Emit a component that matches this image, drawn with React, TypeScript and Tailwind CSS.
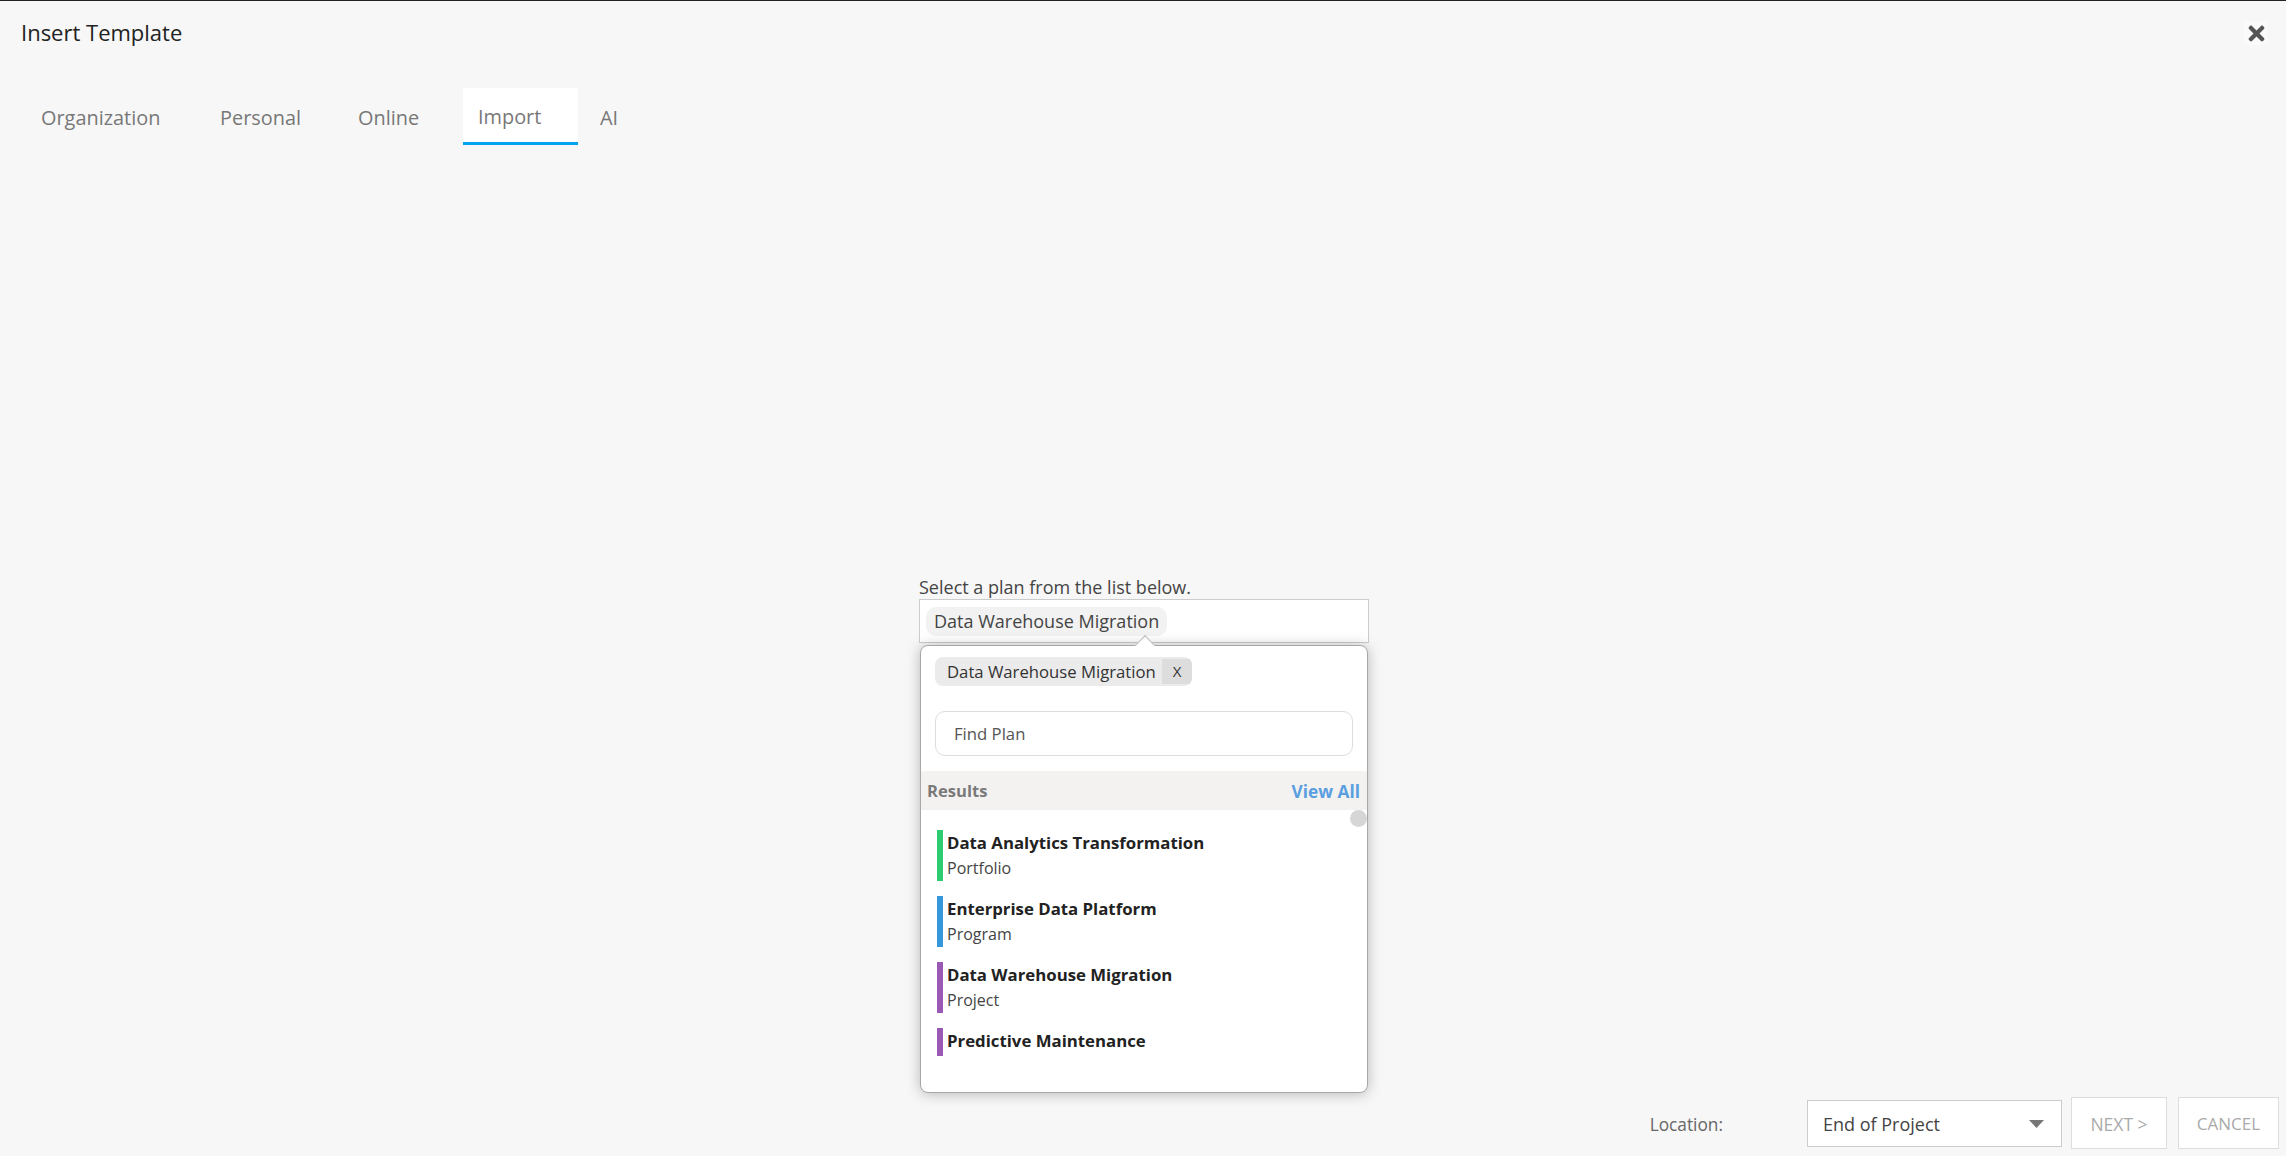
import React from "react";
import { FaTimes } from "react-icons/fa";

const tabs = [
  { label: "Organization", width: "w-[179px]" },
  { label: "Personal", width: "w-[138px]" },
  { label: "Online", width: "w-[120px]" },
  { label: "Import", width: "w-[115px] mr-[7px]" },
  { label: "AI", width: "w-[60px]" },
];
const results = [
  { title: "Data Analytics Transformation", sub: "Portfolio", bar: "bg-[#2ecc71]" },
  { title: "Enterprise Data Platform", sub: "Program", bar: "bg-[#3498db]" },
  { title: "Data Warehouse Migration", sub: "Project", bar: "bg-[#9b59b6]" },
  { title: "Predictive Maintenance", sub: "", bar: "bg-[#9b59b6]" },
];

export default function App() {
  return (
    <div className="h-screen w-full flex flex-col overflow-hidden bg-[#f7f7f7] border-t border-[#222] font-['Open_Sans',sans-serif] text-[#444]">
      <header className="h-[62px] flex items-center justify-between pl-[21px] pr-[18px] shrink-0">
        <h1 className="text-[22px] text-[#222] font-normal">Insert Template</h1>
        <button className="w-[24px] h-[24px] mt-[2px] flex items-center justify-center bg-[#fafafa] text-[#555] text-[23px]">
          <FaTimes />
        </button>
      </header>

      <nav className="h-[57px] mt-[25px] flex pl-[26px] shrink-0 text-[19.9px] text-[#777]">
        {tabs.map((t) => (
          <div
            key={t.label}
            className={
              t.label === "Import"
                ? t.width + " pl-[15px] pt-[14px] bg-white border-b-[3px] border-[#00a4ef]"
                : t.width + " pl-[15px] pt-[15px]"
            }
          >
            {t.label}
          </div>
        ))}
      </nav>

      <main className="flex-1 flex justify-center min-h-0">
        <div className="w-[450px] mt-[430px] ml-[2px]">
          <div className="h-[24px] leading-[24px] text-[18px] text-[#444] whitespace-nowrap">Select a plan from the list below.</div>
          <div className="relative">
            <div className="h-[44px] bg-white border border-[#ccc] flex items-center pl-[6px]">
              <span className="h-[29px] leading-[29px] px-[8px] rounded-[10px] bg-[#f2f2f2] text-[18px] text-[#444] whitespace-nowrap">
                Data Warehouse Migration
              </span>
            </div>

            <div className="absolute left-[1px] top-[46px] w-[448px] h-[448px] z-10 bg-white rounded-[8px] border border-[#a8a8a8] shadow-[0_1px_14px_rgba(0,0,0,0.26)]">
              <div className="absolute left-[217px] top-[-8px] w-[14px] h-[14px] rotate-45 bg-white border-t border-l border-[#bbb]" />
              <div className="relative pt-[11px]">
                <div className="ml-[14px] w-[257px] h-[29px] flex items-center rounded-[8px] bg-[#ebebeb] overflow-hidden pl-[12px] text-[16.7px] text-[#333]">
                  <span className="flex-1 whitespace-nowrap">Data Warehouse Migration</span>
                  <span className="w-[30px] h-[25px] flex items-center justify-center bg-[#ddd] text-[15px]">X</span>
                </div>
                <div className="mx-[14px] mt-[25px] h-[45px] flex items-center pl-[18px] pt-[1px] rounded-[10px] border border-[#ddd] bg-white text-[16.7px] text-[#555]">
                  Find Plan
                </div>
                <div className="mt-[15px] h-[39px] flex items-center justify-between pl-[6px] pr-[7px] pt-[2px] bg-[#f3f2f1] font-bold">
                  <span className="text-[16.6px] text-[#7a7a7a]">Results</span>
                  <a className="text-[17.3px] text-[#5b9fe0]">View All</a>
                </div>
              </div>
              <div className="relative pt-[20px] pl-[16px]">
                <div className="absolute right-0 top-0 w-[17px] h-[17px] rounded-full bg-[#d6d6d6]" />
                {results.map((r) => (
                  <div key={r.title} className={r.sub ? "flex gap-[4px] h-[51px] mb-[15px]" : "flex gap-[4px] h-[28px]"}>
                    <div className={"w-[6px] " + r.bar} />
                    <div>
                      <div className="h-[25px] leading-[25px] text-[16.8px] font-bold text-[#222]">{r.title}</div>
                      {r.sub && <div className="h-[26px] leading-[26px] text-[16px] text-[#444]">{r.sub}</div>}
                    </div>
                  </div>
                ))}
              </div>
            </div>
          </div>
        </div>
      </main>

      <footer className="h-[52px] mb-[7px] flex items-center justify-end pr-[7px] shrink-0">
        <span className="text-[17.3px] text-[#666] mr-[84px] pt-[3px]">Location:</span>
        <div className="w-[255px] h-[47px] mt-[1px] mr-[9px] flex items-center justify-between pl-[15px] pr-[17px] pt-[1px] bg-white border border-[#ccc] text-[18px] text-[#444]">
          End of Project
          <svg width="15" height="8" viewBox="0 0 15 8" className="-mt-[1px]"><polygon points="0,0 15,0 7.5,8" fill="#777" /></svg>
        </div>
        <button className="w-[96px] h-[52px] mr-[11px] pt-[2px] bg-white border border-[#ddd] text-[17.5px] text-[#aaa]">NEXT &gt;</button>
        <button className="w-[101px] h-[52px] pt-[2px] bg-white border border-[#ddd] text-[17px] text-[#aaa]">CANCEL</button>
      </footer>
    </div>
  );
}
